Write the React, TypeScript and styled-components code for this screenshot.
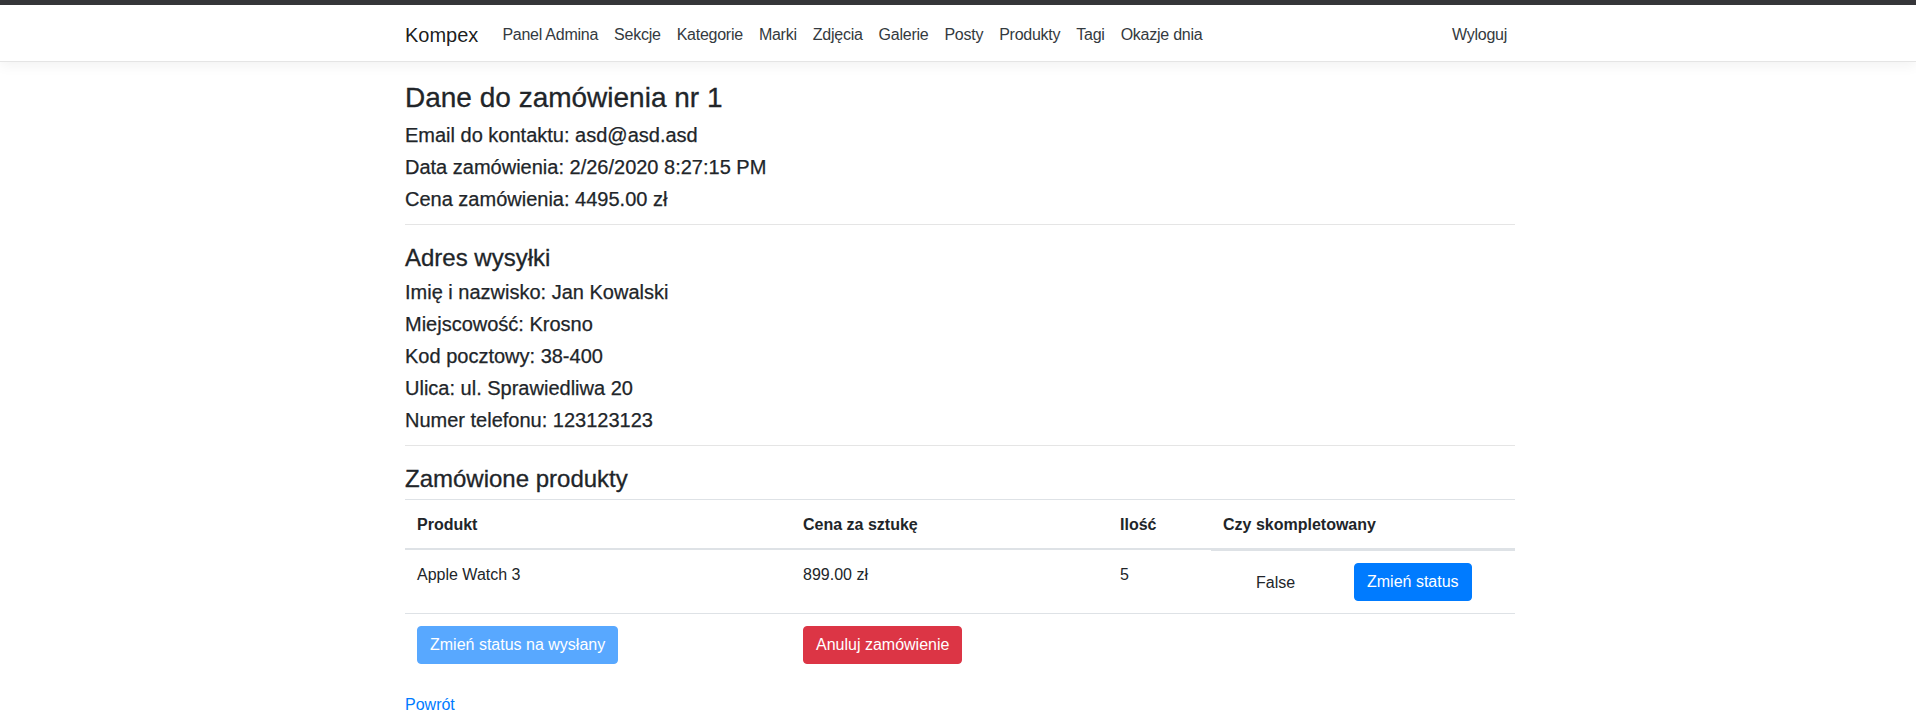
import React from "react";
import styled, { createGlobalStyle } from "styled-components";

const GlobalStyle = createGlobalStyle`
  html, body {
    margin: 0;
    padding: 0;
    background: #fff;
  }
  body {
    font-family: "Liberation Sans", Arial, sans-serif;
    font-size: 16px;
    line-height: 1.5;
    color: #212529;
  }
  * {
    box-sizing: border-box;
  }
`;

const TopStrip = styled.div`
  height: 5px;
  background-color: #36373a;
`;

const NavBar = styled.header`
  background-color: #fff;
  border-bottom: 1px solid #e5e5e5;
  box-shadow: 0 4px 12px rgba(0, 0, 0, 0.05);
  padding: 10px 0 6px;
  margin-bottom: 16px;
`;

const Container = styled.div`
  max-width: 1114px;
  margin: 0 auto;
  padding-left: 4px;
`;

const NavInner = styled(Container)`
  display: flex;
  align-items: center;
  justify-content: space-between;
`;

const NavLeft = styled.div`
  display: flex;
  align-items: center;
`;

const Brand = styled.a`
  font-size: 20px;
  line-height: 30px;
  padding: 5px 0;
  margin-right: 16px;
  color: rgba(0, 0, 0, 0.9);
  text-decoration: none;
`;

const NavMenu = styled.nav`
  display: flex;
  align-items: center;
`;

const NavLink = styled.a`
  padding: 8px;
  color: #343a40;
  text-decoration: none;
  font-size: 16px;
  line-height: 24px;
  letter-spacing: -0.25px;
`;

// headings sit a little lower in their line box, like the original font
const Title = styled.h3`
  font-size: 28px;
  font-weight: 500;
  line-height: 1.2;
  padding-top: 3px;
  margin: 0 0 5px;
  -webkit-text-stroke: 0.3px currentColor;
`;

const SectionTitle = styled.h4`
  font-size: 24px;
  font-weight: 500;
  line-height: 1.2;
  padding-top: 3px;
  margin: 0 0 5px;
  -webkit-text-stroke: 0.3px currentColor;
`;

const Detail = styled.h5`
  font-size: 20px;
  font-weight: 500;
  line-height: 1.2;
  padding-top: 3px;
  margin: 0 0 5px;
  -webkit-text-stroke: 0.25px currentColor;
`;

const Divider = styled.hr`
  border: 0;
  border-top: 1px solid rgba(0, 0, 0, 0.1);
  margin: 13px 0 16px;
`;

const Table = styled.table`
  width: 100%;
  border-collapse: collapse;
  table-layout: fixed;
  margin-bottom: 17px;
`;

const Th = styled.th<{ $width: number }>`
  width: ${(p) => p.$width}px;
  text-align: left;
  font-weight: 700;
  padding: 13px 12px 11px;
  vertical-align: bottom;
  border-top: 1px solid #dee2e6;
  border-bottom: 2px solid #dee2e6;
`;

const Td = styled.td<{ $flush?: boolean }>`
  padding: ${(p) => (p.$flush ? "0" : "13px 12px 11px")};
  vertical-align: top;
  border-top: 1px solid #dee2e6;
`;

const StatusRow = styled.div`
  display: flex;
  align-items: baseline;
  border-top: 1px solid #dee2e6;
  padding: 12px 0 12px 45px;
`;

const StatusValue = styled.span`
  flex: 0 0 98px;
  position: relative;
  top: 1px;
`;

const Button = styled.button<{ $variant: "primary" | "danger" }>`
  font-family: inherit;
  font-size: 16px;
  line-height: 24px;
  padding: 6px 12px;
  border-radius: 4px;
  border: 1px solid
    ${(p) => (p.$variant === "danger" ? "#dc3545" : "#007bff")};
  background-color: ${(p) => (p.$variant === "danger" ? "#dc3545" : "#007bff")};
  color: #fff;
  cursor: pointer;
  &:disabled {
    opacity: 0.65;
    cursor: default;
  }
`;

const ActionCell = styled(Td)`
  padding: 12px;
`;

const BackLink = styled.a`
  color: #007bff;
  text-decoration: none;
`;

const navItems = [
  "Panel Admina",
  "Sekcje",
  "Kategorie",
  "Marki",
  "Zdjęcia",
  "Galerie",
  "Posty",
  "Produkty",
  "Tagi",
  "Okazje dnia",
];

const App = () => {
  return (
    <>
      <GlobalStyle />
      <TopStrip />
      <NavBar>
        <NavInner>
          <NavLeft>
            <Brand href="#">Kompex</Brand>
            <NavMenu>
              {navItems.map((item) => (
                <NavLink key={item} href="#">
                  {item}
                </NavLink>
              ))}
            </NavMenu>
          </NavLeft>
          <NavLink href="#">Wyloguj</NavLink>
        </NavInner>
      </NavBar>
      <Container>
        <Title>Dane do zamówienia nr 1</Title>
        <Detail>Email do kontaktu: asd@asd.asd</Detail>
        <Detail>Data zamówienia: 2/26/2020 8:27:15 PM</Detail>
        <Detail>Cena zamówienia: 4495.00 zł</Detail>
        <Divider />
        <SectionTitle>Adres wysyłki</SectionTitle>
        <Detail>Imię i nazwisko: Jan Kowalski</Detail>
        <Detail>Miejscowość: Krosno</Detail>
        <Detail>Kod pocztowy: 38-400</Detail>
        <Detail>Ulica: ul. Sprawiedliwa 20</Detail>
        <Detail>Numer telefonu: 123123123</Detail>
        <Divider />
        <SectionTitle>Zamówione produkty</SectionTitle>
        <Table>
          <thead>
            <tr>
              <Th $width={386}>Produkt</Th>
              <Th $width={317}>Cena za sztukę</Th>
              <Th $width={103}>Ilość</Th>
              <Th $width={304}>Czy skompletowany</Th>
            </tr>
          </thead>
          <tbody>
            <tr>
              <Td>Apple Watch 3</Td>
              <Td>899.00 zł</Td>
              <Td>5</Td>
              <Td $flush>
                <StatusRow>
                  <StatusValue>False</StatusValue>
                  <Button $variant="primary">Zmień status</Button>
                </StatusRow>
              </Td>
            </tr>
            <tr>
              <ActionCell>
                <Button $variant="primary" disabled>
                  Zmień status na wysłany
                </Button>
              </ActionCell>
              <ActionCell>
                <Button $variant="danger">Anuluj zamówienie</Button>
              </ActionCell>
              <ActionCell />
              <ActionCell />
            </tr>
          </tbody>
        </Table>
        <BackLink href="#">Powrót</BackLink>
      </Container>
    </>
  );
};

export default App;
